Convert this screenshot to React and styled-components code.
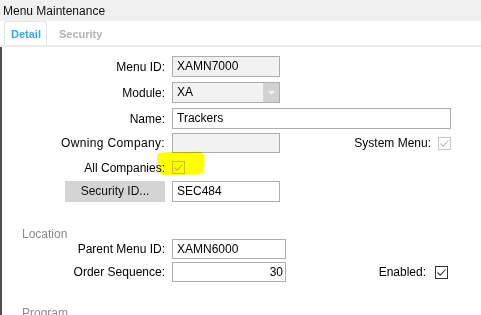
import React from 'react';
import styled, {createGlobalStyle} from 'styled-components';

const GlobalStyle = createGlobalStyle`
  html, body {
    margin: 0;
    padding: 0;
    background: #ffffff;
  }
  body {
    font-family: "Liberation Sans", Arial, sans-serif;
    font-size: 12px;
    color: #000000;
  }
`

const WindowSC = styled('div')`
  width: 481px;
  height: 315px;
  overflow: hidden;
  display: flex;
  flex-direction: column;
`

const TitleBarSC = styled('div')`
  height: 21px;
  line-height: 21px;
  padding: 1px 0 0 3px;
  box-sizing: border-box;
  background: #f0f0f0;
  font-size: 12px;
  color: #111111;
`

const TabBarSC = styled('div')`
  height: 27px;
  display: flex;
  align-items: flex-end;
  gap: 5px;
  padding-left: 4px;
  border-bottom: 2px solid #ebebeb;
  background: #ffffff;
`

const TabSC = styled('div')`
  height: 23px;
  line-height: 24px;
  padding: 0 5px 0 6px;
  border: 1px solid ${p => p.$active ? '#dfe6ee' : 'transparent'};
  border-bottom: none;
  border-radius: 3px 3px 0 0;
  font-size: 11px;
  font-weight: bold;
  color: ${p => p.$active ? '#3ba3dd' : '#b3b3b3'};
`

const ContentSC = styled('div')`
  position: relative;
  flex: 1;
  border-left: 2px solid #505050;
  padding-top: 9px;
`

const RowSC = styled('div')`
  display: flex;
  align-items: center;
  width: 449px;
  height: ${p => p.$h || 21}px;
  margin-top: ${p => p.$mt || 0}px;
`

const LabelSC = styled('div')`
  width: 163px;
  flex-shrink: 0;
  margin-right: 7px;
  text-align: right;
  white-space: nowrap;
  letter-spacing: ${p => p.$spacing || 0}px;
  display: flex;
  justify-content: flex-end;
`

const FieldSC = styled('div')`
  box-sizing: border-box;
  width: ${p => p.$w}px;
  height: 100%;
  border: 1px solid #adadad;
  background: ${p => p.$disabled ? '#f2f2f2' : '#ffffff'};
  padding: 0 ${p => p.$right ? 2 : 4}px 0 4px;
  line-height: ${p => p.$lh || 19}px;
  text-align: ${p => p.$right ? 'right' : 'left'};
  white-space: nowrap;
  overflow: hidden;
`

const SelectSC = styled('div')`
  box-sizing: border-box;
  width: 108px;
  height: 100%;
  border: 1px solid #adadad;
  background: #f2f2f2;
  display: flex;
`

const SelectTextSC = styled('div')`
  flex: 1;
  padding-left: 4px;
  line-height: 19px;
`

const SelectArrowSC = styled('div')`
  width: 16px;
  background: #d2d2d2;
  display: flex;
  align-items: center;
  justify-content: center;
`

const ButtonSC = styled('div')`
  width: 100px;
  height: 21px;
  line-height: 21px;
  text-align: center;
  background: #d4d4d4;
  color: #111111;
`

const SpacerSC = styled('div')`
  flex: 1;
`

const SideLabelSC = styled('div')`
  margin-right: ${p => p.$gap}px;
  white-space: nowrap;
`

const CheckSC = styled('div')`
  box-sizing: border-box;
  width: 13px;
  height: 13px;
  border: 1px solid ${p => p.$disabled ? '#c6c6c6' : '#333333'};
  background: #ffffff;
  margin-right: ${p => p.$mr || 0}px;
  display: flex;
  align-items: center;
  justify-content: center;
`

const SectionTitleSC = styled('div')`
  height: 9px;
  line-height: 9px;
  padding-left: 20px;
  margin-top: ${p => p.$mt}px;
  color: #8a8a8a;
  white-space: nowrap;
`

const HighlightSC = styled('svg')`
  position: absolute;
  left: 153px;
  top: 104px;
  mix-blend-mode: multiply;
  pointer-events: none;
`

const Check = ({disabled, mr}) => (
    <CheckSC $disabled={disabled} $mr={mr}>
        <svg width="11" height="11" viewBox="0 0 11 11">
            <polyline points="1.5,5.5 4.2,8.2 9.5,2.5" fill="none"
                      stroke={disabled ? '#b9b9b9' : '#333333'} strokeWidth="1.1"/>
        </svg>
    </CheckSC>
)

const App = () => {
    return (
        <WindowSC>
            <GlobalStyle/>
            <TitleBarSC>Menu Maintenance</TitleBarSC>
            <TabBarSC>
                <TabSC $active>Detail</TabSC>
                <TabSC>Security</TabSC>
            </TabBarSC>
            <ContentSC>
                <RowSC>
                    <LabelSC>Menu ID:</LabelSC>
                    <FieldSC $w={108} $disabled>XAMN7000</FieldSC>
                </RowSC>
                <RowSC $mt={5}>
                    <LabelSC>Module:</LabelSC>
                    <SelectSC>
                        <SelectTextSC>XA</SelectTextSC>
                        <SelectArrowSC>
                            <svg width="7" height="4" viewBox="0 0 7 4">
                                <polygon points="0,0 7,0 3.5,4" fill="#f4f4f4"/>
                            </svg>
                        </SelectArrowSC>
                    </SelectSC>
                </RowSC>
                <RowSC $mt={5}>
                    <LabelSC>Name:</LabelSC>
                    <FieldSC $w={279}>Trackers</FieldSC>
                </RowSC>
                <RowSC $mt={4} $h={20}>
                    <LabelSC $spacing={0.35}>Owning Company:</LabelSC>
                    <FieldSC $w={108} $lh={18} $disabled/>
                    <SpacerSC/>
                    <SideLabelSC $gap={7}>System Menu:</SideLabelSC>
                    <Check disabled/>
                </RowSC>
                <RowSC $mt={4}>
                    <LabelSC>All Companies:</LabelSC>
                    <Check disabled/>
                </RowSC>
                <RowSC $mt={3}>
                    <LabelSC><ButtonSC>Security ID...</ButtonSC></LabelSC>
                    <FieldSC $w={108}>SEC484</FieldSC>
                </RowSC>

                <SectionTitleSC $mt={28}>Location</SectionTitleSC>
                <RowSC $h={20}>
                    <LabelSC>Parent Menu ID:</LabelSC>
                    <FieldSC $w={114} $lh={18}>XAMN6000</FieldSC>
                </RowSC>
                <RowSC $mt={3} $h={20}>
                    <LabelSC>Order Sequence:</LabelSC>
                    <FieldSC $w={114} $lh={18} $right>30</FieldSC>
                    <SpacerSC/>
                    <SideLabelSC $gap={9}>Enabled:</SideLabelSC>
                    <Check mr={3}/>
                </RowSC>

                <SectionTitleSC $mt={27}>Program</SectionTitleSC>

                <HighlightSC width="50" height="26" viewBox="0 0 50 26">
                    <path d="M4 2 Q 14 0.5 26 1.2 L 44 0.8 Q 49 1.5 49.5 6 L 49 17 Q 48.5 23 43 23.5 L 10 24 Q 3.5 24 2.5 19 L 2 7 Q 2 2.5 4 2 Z"
                          fill="#ffff00"/>
                </HighlightSC>
            </ContentSC>
        </WindowSC>
    );
}

export default App;
